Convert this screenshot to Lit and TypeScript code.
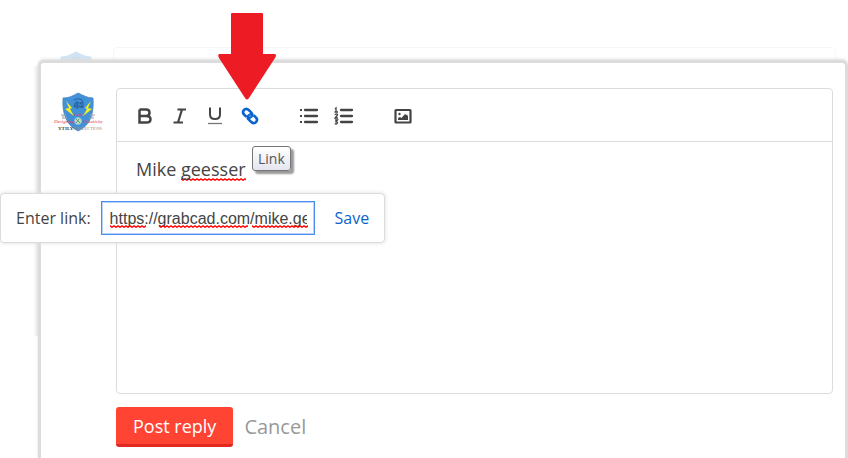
import { LitElement, html, css, svg } from "lit";
import { customElement, state } from "lit/decorators.js";

const crest = svg`
  <path d="M9 6C16 6 20 3 24 1C29 3 33 6 39 6C40 21 37 33 24 39C12 33 8 21 9 6Z" fill="#4291d8" stroke="#4a86bd" stroke-width="0.800"/>
  <path d="M12 9L18 16L16 17L20 24L11 17L15 16Z M37 9L31 16L33 17L29 24L38 17L34 16Z" fill="#f6ef20"/>
  <path d="M20 8q4-3 8 0l1 3h-8l-1 4h9v-4m-6-2v8m3-7l3 6m-9-2q5-3 8 2" fill="none" stroke="#245a93" stroke-width="0.900"/>
  <path d="M7 23h5M8 26h5M9 23v3M36 23h5M35 26h5M38 23v3" fill="none" stroke="#a4a4a4"/>
  <circle cx="24" cy="29" r="3.500" fill="#cfe0b8" stroke="#7fc0dc"/>
  <path d="M22 27l4 4M25 27l-3 4" stroke="#4d9a80"/>`;

@customElement("user-avatar")
export class UserAvatar extends LitElement {
  static styles = css`
    :host { display: block; width: 50px; height: 42px; }
    svg { display: block; width: 50px; height: 42px; overflow: visible; }
    .script { font: italic 5px "Liberation Serif", serif; fill: #e03848; }
    .name { font: bold 5px "Liberation Serif", serif; fill: #444; }
    .tail { font: 4px "Liberation Serif", serif; fill: #a58a75; }
  `;
  render() {
    return html`<svg viewBox="0 0 50 42" role="img" aria-label="Avatar">
      ${crest}
      <text class="script" x="0" y="31">Designing</text>
      <text class="script" x="20" y="24">with</text>
      <text class="script" x="29" y="31">Creativity</text>
      <text class="name" x="4" y="38">YTILY</text>
      <text class="tail" x="20" y="38">PRODUCTIONS</text>
    </svg>`;
  }
}

const icons = {
  Bold: svg`<path d="M4.500 3.500H11Q14.500 3.500 14.500 6.700Q14.500 10 11 10H4.500M11 10Q15.500 10 15.500 13.200Q15.500 16.500 11.500 16.500H4.500V3.500" stroke-width="2.500"/>`,
  Italic: svg`<path d="M7.500 3.500H16M3.500 16.500h9.500M12 3.500L8 16.500" stroke-width="2.200"/>`,
  Underline: svg`<path d="M5 1.500v7Q5 13 10 13Q15 13 15 8.500V1.500" stroke-width="2"/><path d="M3 17.500h14" stroke-width="1.300" stroke="#777"/>`,
  Link: svg`<g transform="rotate(43 10 10)" stroke-width="2.600"><path d="M8 13H5Q1.500 13 1.500 9.700Q1.500 6.500 5 6.500H8Q11.500 6.500 11.500 9.700"/><path d="M12 7H15Q18.500 7 18.500 10.300Q18.500 13.500 15 13.500H12Q8.500 13.500 8.500 10.300"/><path d="M11.500 9.700Q11.500 12 9.500 12.800M8.500 10.300Q8.500 8 10.500 7.200" stroke-width="2.200"/></g><path d="M5.500 6.500l2 2M12.500 12.500l2 2" stroke="#fff" stroke-width="1.200"/>`,
  "Bulleted list": svg`<path d="M6 4h12M6 10h12M6 16h12" stroke-width="2.300" stroke-linecap="round"/><path d="M1 4h2M1 10h2M1 16h2" stroke-width="2"/>`,
  "Numbered list": svg`<path d="M7 4h11M7 10h11M7 16h11" stroke-width="2.300" stroke-linecap="round"/><path d="M1 3l1-1v4M0.500 6h3.500M0.800 8.800Q3.500 7 3.500 9L1 12H4M1 14H3.500L2 15.800Q4 16 3.200 17.400Q2 18.500 0.800 17.400" stroke-width="1.300"/>`,
  Image: svg`<rect x="2.500" y="4" width="15" height="12.500" rx="0.500" stroke-width="2.200"/><path d="M5 14v-2l2-1 1.500 1L12 8l1 1 1-.5 1 2V14Z" fill="currentColor" stroke="none"/><circle cx="6.500" cy="8" r="1.200" fill="currentColor" stroke="none"/>`,
};
type IconName = keyof typeof icons;

const groups: IconName[][] = [
  ["Bold", "Italic", "Underline", "Link"],
  ["Bulleted list", "Numbered list"],
  ["Image"],
];

@customElement("app-root")
export class AppRoot extends LitElement {
  @state() private url = "https://grabcad.com/mike.geesser";

  static styles = css`
    :host {
      display: block;
      font-family: "Open Sans", "Noto Sans", sans-serif;
      color: #444;
      background: #fff;
    }
    * { box-sizing: border-box; }
    button { font: inherit; border: 0; background: none; cursor: pointer; }
    .page {
      position: relative;
      display: flex;
      flex-direction: column;
      min-height: 100vh;
      overflow: hidden;
      padding: 60px 0 0 38px;
    }
    .behind {
      position: absolute;
      inset: 47px 12px auto 52px;
      display: flex;
      gap: 11px;
      opacity: 0.25;
    }
    .behind user-avatar { margin-top: 4px; }
    .behind-box { flex: 1; height: 60px; border: 1px solid #ddd; border-radius: 4px; }
    .fade {
      position: absolute;
      left: 33px;
      top: 66px;
      width: 5px;
      height: 270px;
      background: linear-gradient(to right, #fff, #e8e8e8);
    }
    .modal {
      position: relative;
      flex: 1;
      display: flex;
      align-items: flex-start;
      gap: 12px;
      padding: 25px 12px 12px 13px;
      background: #fff;
      border: 3px solid #dcdcdc;
      border-bottom: 0;
      border-radius: 6px 6px 0 0;
      box-shadow: 0 -1px 3px #ddd;
    }
    .modal user-avatar { margin-top: 4px; }
    .form { flex: 1; min-width: 0; }
    .editor { border: 1px solid #dcdcdc; border-radius: 4px; }
    .toolbar {
      display: flex;
      gap: 24px;
      height: 53px;
      padding: 2px 10px 0;
      align-items: center;
      border-bottom: 1px solid #dcdcdc;
    }
    .group { display: flex; }
    .tool { width: 35px; height: 36px; padding: 0; display: grid; place-items: center; color: #444; }
    .tool.active { color: #0b63ce; }
    .tool svg { width: 20px; height: 20px; fill: none; stroke: currentColor; }
    .content { height: 251px; padding: 15px 19px; font-size: 18px; line-height: 24px; outline: 0; }
    .wave {
      background: url("data:image/svg+xml,%3Csvg xmlns='http://www.w3.org/2000/svg' width='4' height='3'%3E%3Cpath d='M-1 0L0 .8L2 2.2L4 .8L5 0' fill='none' stroke='%23f00' stroke-width='1.4'/%3E%3C/svg%3E") repeat-x left bottom;
    }
    .actions { display: flex; align-items: center; gap: 11px; margin-top: 13px; }
    .post {
      height: 40px;
      padding: 0 17px;
      font-size: 18px;
      color: #fff;
      background: #ff4433;
      border-bottom: 3px solid #e2291f;
      border-radius: 3px;
    }
    .cancel { padding: 0; font-size: 20px; line-height: 36px; color: #999; }
    .tooltip {
      position: absolute;
      left: 252px;
      top: 146px;
      padding: 0 5px;
      font-size: 14px;
      line-height: 23px;
      color: #575757;
      border: 1px solid #767676;
      border-radius: 3px;
      background: linear-gradient(#fff, #e4e5f0);
      box-shadow: 3px 3px 2px #999;
    }
    .popup {
      position: absolute;
      left: 0;
      top: 193px;
      display: flex;
      align-items: center;
      height: 50px;
      padding: 0 15px;
      gap: 10px;
      background: #fff;
      border: 1px solid #dcdcdc;
      border-radius: 4px;
      box-shadow: 0 0 4px #ddd;
      font-size: 16px;
    }
    .field { position: relative; display: flex; }
    .field input {
      width: 214px;
      height: 34px;
      padding: 2px 7px 0 8px;
      border: 1px solid #4a8cf0;
      box-shadow: inset 0 0 0 1px #b8d2fa;
      outline: 0;
      font: 16px "Liberation Sans", Arial, sans-serif;
      color: #444;
    }
    .marks { position: absolute; left: 9px; top: 24px; display: flex; pointer-events: none; }
    .marks .wave { height: 3px; }
    .w-scheme { width: 36px; margin-right: 13px; }
    .w-host { width: 89px; margin-right: 4px; }
    .w-path { width: 56px; }
    .save { padding: 0; margin-left: 10px; color: #0b63ce; }
    .arrow { position: absolute; left: 218px; top: 13px; width: 58px; height: 88px; fill: #ed1c24; }
  `;

  private tool(name: IconName) {
    return html`<button class="tool ${name === "Link" ? "active" : ""}" type="button" aria-label=${name}>
      <svg viewBox="0 0 20 20" aria-hidden="true">${icons[name]}</svg>
    </button>`;
  }

  render() {
    return html`<main class="page">
      <div class="behind" aria-hidden="true">
        <user-avatar></user-avatar>
        <div class="behind-box"></div>
      </div>
      <div class="fade"></div>
      <section class="modal" aria-label="Reply">
        <user-avatar></user-avatar>
        <div class="form">
          <div class="editor">
            <div class="toolbar" role="toolbar" aria-label="Formatting">
              ${groups.map((g) => html`<div class="group">${g.map((n) => this.tool(n))}</div>`)}
            </div>
            <div class="content" role="textbox" aria-label="Reply text" aria-multiline="true" contenteditable="true" spellcheck="false">Mike <span class="wave">geesser</span></div>
          </div>
          <div class="actions">
            <button class="post" type="button">Post reply</button>
            <button class="cancel" type="button">Cancel</button>
          </div>
        </div>
      </section>
      <div class="tooltip" role="tooltip">Link</div>
      <div class="popup">
        <label for="url">Enter link:</label>
        <div class="field">
          <input id="url" type="text" spellcheck="false" .value=${this.url}
            @input=${(e: Event) => (this.url = (e.target as HTMLInputElement).value)} />
          <div class="marks" aria-hidden="true">
            <span class="wave w-scheme"></span><span class="wave w-host"></span><span class="wave w-path"></span>
          </div>
        </div>
        <button class="save" type="button">Save</button>
      </div>
      <svg class="arrow" viewBox="0 0 58 88" aria-hidden="true">
        <path d="M14 0H44Q45 0 45 1V41H57Q58 41 58 43L57 45L31 85Q29 88 27 85L1 45Q-1 41 2 41H13V1Q13 0 14 0Z" />
      </svg>
    </main>`;
  }
}
